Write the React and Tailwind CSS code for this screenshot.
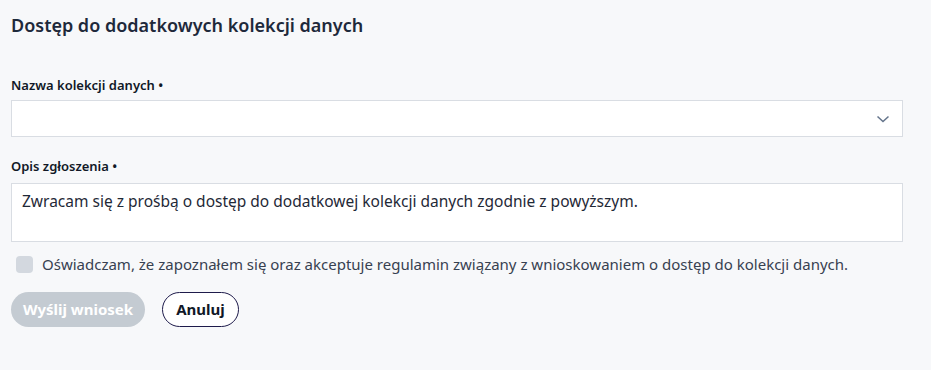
export default function App() {
  return (
    <div className="min-h-[370px] w-full bg-[#f7f8fa] px-[11px] pt-[12px] font-['Noto_Sans',sans-serif] text-[#1f2937]">
      <h1 className="text-[18px] font-semibold leading-[26px] text-[#1e293b]">
        Dostęp do dodatkowych kolekcji danych
      </h1>

      <div className="mt-[38px]">
        <label className="block text-[13px] font-semibold leading-[18px] text-[#111827]">
          Nazwa kolekcji danych •
        </label>
        <div className="mt-[6px] flex h-[37px] w-[892px] items-center justify-end border border-[#d9dde3] bg-white pr-[12px]">
          <svg width="14" height="8" viewBox="0 0 14 8" fill="none">
            <path d="M1.5 1.5 L7 6.5 L12.5 1.5" stroke="#64748b" strokeWidth="1.5" />
          </svg>
        </div>
      </div>

      <div className="mt-[20px]">
        <label className="block text-[13px] font-semibold leading-[18px] text-[#111827]">
          Opis zgłoszenia •
        </label>
        <div className="mt-[8px] h-[59px] w-[892px] border border-[#d9dde3] bg-white px-[10px] pt-[6px] text-[15.5px] leading-[22px] text-[#1f2937]">
          Zwracam się z prośbą o dostęp do dodatkowej kolekcji danych zgodnie z powyższym.
        </div>
      </div>

      <div className="mt-[11px] flex items-center gap-[9px] pl-[5px]">
        <span className="h-[17px] w-[17px] rounded-[4px] bg-[#d3d8df]" />
        <span className="text-[15px] leading-[22px] text-[#374151]">
          Oświadczam, że zapoznałem się oraz akceptuje regulamin związany z wnioskowaniem o dostęp do kolekcji danych.
        </span>
      </div>

      <div className="mt-[17px] flex gap-[17px]">
        <button className="h-[35px] w-[134px] rounded-full bg-[#c4cbd2] text-[15px] font-bold text-white">
          Wyślij wniosek
        </button>
        <button className="h-[35px] w-[77px] rounded-full border border-[#1e1b4b] bg-white text-[15px] font-bold text-[#111827]">
          Anuluj
        </button>
      </div>
    </div>
  );
}
